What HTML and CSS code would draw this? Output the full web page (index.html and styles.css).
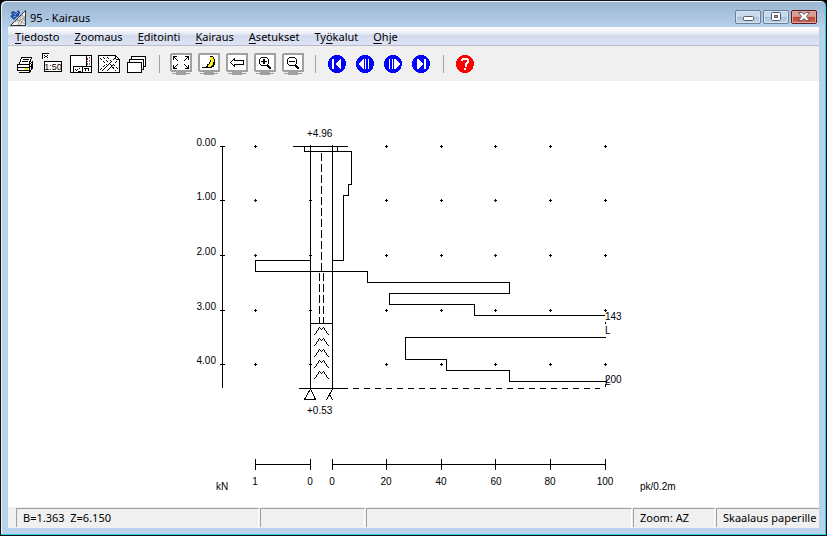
FILE: index.html
```html
<!DOCTYPE html>
<html lang="fi">
<head>
<meta charset="utf-8">
<title>95 - Kairaus</title>
<link rel="stylesheet" href="styles.css">
</head>
<body>
<div class="window">
  <header class="titlebar">
    <svg class="app-icon" viewBox="0 0 16 16" aria-hidden="true">
      <path d="M15.5 0.5V15.5H0.5Z" fill="#f4f4ee" stroke="#333"/>
      <path d="M4 12L15 8M8 15L12 4M7 9L15 14M12 4L15 12M10 15L15 6" stroke="#999" fill="none"/>
      <path d="M1 2L4 1L6 3L8 0L10 2L9 6L7 7L4 10L2 8L0 6L2 5Z" fill="#1d4d9c"/>
      <path d="M3 3L5 5L8 2M3 7L6 6" stroke="#70a4e4" fill="none"/>
    </svg>
    <h1 class="title">95 - Kairaus</h1>
    <div class="window-buttons">
      <button class="win-btn" aria-label="Pienennä"><svg viewBox="0 0 24 12"><rect x="7.5" y="5.5" width="10" height="4" rx="1" fill="#fff" stroke="#555b68"/></svg></button>
      <button class="win-btn" aria-label="Suurenna"><svg viewBox="0 0 24 12"><rect x="7.500" y="1.500" width="9" height="8" rx="1" fill="#fff" stroke="#555b68"/><rect x="10.500" y="4.500" width="3" height="2" fill="#9db6d0" stroke="#555b68"/></svg></button>
      <button class="win-btn close" aria-label="Sulje"><svg viewBox="0 0 24 12"><path d="M6.500 1.500H10L12 3.500L14 1.500H17.500L14.500 5.500L17.500 9.500H14L12 7.500L10 9.500H6.500L9.500 5.500Z" fill="#fff" stroke="#555b68"/></svg></button>
    </div>
  </header>
  <div class="content">
    <nav class="menubar">
      <button><u>T</u>iedosto</button><button><u>Z</u>oomaus</button><button><u>E</u>ditointi</button><button><u>K</u>airaus</button><button><u>A</u>setukset</button><button>Ty<u>ö</u>kalut</button><button><u>O</u>hje</button>
    </nav>
    <svg width="0" height="0" class="defs" aria-hidden="true">
      <symbol id="monitor" viewBox="0 0 28 28">
        <path d="M4 3H24L25 4V21L24 22H4L3 21V4L4 3Z" fill="#a0a0a0"/>
        <path d="M5 5H23V20H5Z" fill="#fff"/>
        <path d="M5 23H23V24H19V25H9V24H5Z" fill="#a0a0a0"/>
        <path d="M9 22H19V23H9Z" fill="#a0a0a0"/>
      </symbol>
    </svg>
    <div class="toolbar" role="toolbar" aria-label="Työkalut">
      <button aria-label="Tulosta"><svg viewBox="0 0 28 28">
        <path d="M10 7H20L17 15H7Z" fill="#fff"/>
        <path d="M6 15H21V20L18 23H8L6 20Z" fill="#fff"/>
        <path d="M10.500 7.500H20.500V9M10.500 7.500L8.500 14M20 9L18 14M12 9.500H18M11 11.500H17M6 14.500H18M6.500 15V21M7 17.500H18M18 14.500L21.500 11.500V18M7 20.500H18V15M8 22.500H18L22 18M18 18L22 15M20 20V14" fill="none" stroke="#000"/>
        <path d="M14 18H17V20H14Z" fill="#f4ef00"/>
      </svg></button>
      <button aria-label="Mittakaava 1:50"><svg viewBox="0 0 28 28">
        <rect x="5.500" y="11.500" width="17" height="10" fill="#fff" stroke="#000"/>
        <rect x="3" y="3" width="7" height="6" fill="#fff"/>
        <path d="M3 3H10V4H4V9H3ZM5 5H6V6H5ZM8 5H9V6H8ZM6 6H8V7H6ZM5 7H6V8H5ZM8 7H9V8H8Z" fill="#000"/>
        <text x="14" y="20" class="scale-text">1:50</text>
      </svg></button>
      <button aria-label="Sivun asettelu"><svg viewBox="0 0 28 28">
        <rect x="3.500" y="5.500" width="21" height="17" fill="#fff" stroke="#000"/>
        <path d="M19.500 6V17M6 16.500H24M6.500 17V22M15.500 17V22" stroke="#000"/>
        <path d="M20 8H21V10H20Z" fill="#b00"/><path d="M20 11H21V12H20Z" fill="#c0c"/><path d="M20 13H21V15H20Z" fill="#080"/>
        <path d="M22.500 7V16" stroke="#777" stroke-dasharray="2 1"/>
        <path d="M8 19H9V20H8ZM9 20H10V21H9ZM10 19H11V20H10ZM12 18H13V19H12ZM11 21H14V22H11ZM17 18H22V19H17ZM18 19H19V21H18ZM21 19H22V21H21Z"/>
      </svg></button>
      <button aria-label="Rasterit"><svg viewBox="0 0 28 28">
        <path d="M3.500 5.500H20.500L24.500 9.500V22.500H3.500Z" fill="#fff" stroke="#000"/>
        <path d="M20.500 5.500V9.500H24.500M5 8L12 15M8 7L15 14M12 7L16 11M20 8L7 21M22 11L12 21M5 20L11 14M15 14L21 21M18 14L23 19" fill="none" stroke="#000" stroke-dasharray="3 1"/>
      </svg></button>
      <button aria-label="Ikkunat"><svg viewBox="0 0 28 28" fill="#fff" stroke="#000">
        <rect x="8.500" y="6.500" width="14" height="10"/><rect x="6.500" y="9.500" width="14" height="10"/><rect x="4.500" y="12.500" width="14" height="10"/>
      </svg></button>
      <span class="sep"></span>
      <button aria-label="Koko kuva"><svg viewBox="0 0 28 28"><use href="#monitor"/>
        <path d="M6.500 10V6.500H10M7 7L11 11M18 6.500H21.500V10M21 7L17 11M6.500 15V18.500H10M7 18L11 14M18 18.500H21.500V15M21 18L17 14" fill="none" stroke="#000"/>
      </svg></button>
      <button aria-label="Piirrä uudelleen"><svg viewBox="0 0 28 28"><use href="#monitor"/>
        <path d="M15 6H18V7H19V9H20V15H19V17H17V18H7V17H11V16H12V14H14V12H15Z" fill="#000"/>
        <path d="M15 7H17V9H18V11H17V14H16V15H15V16H13V15H14V14H15V12H16V9H15Z" fill="#ffef20" stroke="#ffef20" stroke-width="1"/>
      </svg></button>
      <button aria-label="Edellinen näkymä"><svg viewBox="0 0 28 28"><use href="#monitor"/>
        <path d="M7.500 12.500L11.500 8.500V10.500H20.500V14.500H11.500V16.500Z" fill="#fff" stroke="#000"/>
      </svg></button>
      <button aria-label="Lähennä"><svg viewBox="0 0 28 28"><use href="#monitor"/>
        <circle cx="13" cy="11.500" r="4.500" fill="#fff" stroke="#000"/><path d="M10 11H16V12H10ZM12 9H14V14H12Z"/><path d="M16 15L20 19" stroke="#000" stroke-width="2"/>
      </svg></button>
      <button aria-label="Loitonna"><svg viewBox="0 0 28 28"><use href="#monitor"/>
        <circle cx="13" cy="11.500" r="4.500" fill="#fff" stroke="#000"/><path d="M10 11H16V12H10Z"/><path d="M16 15L20 19" stroke="#000" stroke-width="2"/>
      </svg></button>
      <span class="sep"></span>
      <button aria-label="Ensimmäinen"><svg viewBox="0 0 28 28"><circle cx="14" cy="14" r="9" fill="#00f"/><path d="M9 9H11V19H9ZM17 9H18V19H17L12 14Z" fill="#fff"/></svg></button>
      <button aria-label="Edellinen"><svg viewBox="0 0 28 28"><circle cx="14" cy="14" r="9" fill="#00f"/><path d="M12 9H13V19H12L7 14ZM14 9H15V19H14ZM17 9H18V19H17Z" fill="#fff"/></svg></button>
      <button aria-label="Seuraava"><svg viewBox="0 0 28 28"><circle cx="14" cy="14" r="9" fill="#00f"/><path d="M16 9H15V19H16L21 14ZM10 9H11V19H10ZM13 9H14V19H13Z" fill="#fff"/></svg></button>
      <button aria-label="Viimeinen"><svg viewBox="0 0 28 28"><circle cx="14" cy="14" r="9" fill="#00f"/><path d="M17 9H19V19H17ZM11 9H10V19H11L16 14Z" fill="#fff"/></svg></button>
      <span class="sep"></span>
      <button aria-label="Ohje"><svg viewBox="0 0 28 28"><circle cx="14" cy="14" r="9" fill="#f00"/><path d="M11 11V9.500L12.500 8.500H15.500L17 9.500V12L14.500 14V16.500M14 18V20" fill="none" stroke="#fff" stroke-width="2"/></svg></button>
    </div>
    <main class="canvas">
      <svg class="chart" viewBox="8 81 811 426" role="img" aria-label="Kairausdiagrammi">
        <defs>
          <path id="mark" d="M-1 0.500H2M0.500 -1V2"/>
          <g id="row"><use href="#mark" x="255"/><use href="#mark" x="310"/><use href="#mark" x="386"/><use href="#mark" x="441"/><use href="#mark" x="495"/><use href="#mark" x="550"/><use href="#mark" x="605"/></g>
          <path id="chevron" d="M314.500 9L319.500 1.500L321.500 3.500L323.500 1.500L328.500 9"/>
        </defs>
        <g class="lines">
          <path d="M222.500 146V388M220 146.500H225M220 200.500H225M220 255.500H225M220 310.500H225M220 364.500H225"/>
          <use href="#row" y="146"/><use href="#row" y="200"/><use href="#row" y="255"/><use href="#row" y="310"/><use href="#row" y="364"/>
          <path d="M293 146.500H348M310.500 145V389M332.500 145V389M304.500 146V151.500H351.500V184.500H348.500V195.500H343.500V260.500H332M337.500 146V151"/>
          <path d="M311 260.500H255.500V271.500H367.500V282.500H509.500V293.500H389.500V304.500H474.500V315.500H605"/>
          <path d="M606 337.500H405.500V359.500H446.500V370.500H509.500V381.500H606M605.500 322V324M605.500 384V387"/>
          <path d="M321.500 153V271" stroke-dasharray="8 3"/>
          <path d="M319.500 273V323M323.500 273V323" stroke-dasharray="8 3"/>
          <path d="M310 323.500H333M299 388.500H348"/>
          <path d="M353 388.500H600" stroke-dasharray="6 5"/>
          <use href="#chevron" y="326"/><use href="#chevron" y="337"/><use href="#chevron" y="348"/><use href="#chevron" y="359"/><use href="#chevron" y="370"/>
          <path d="M310.500 389L304.500 399.500H315.500L310.500 389M332.500 389L326.500 400M329.500 394L332.500 400"/>
          <path d="M255 464.500H311M332 464.500H606M255.500 459V470M310.500 459V470M332.500 459V470M386.500 459V470M441.500 459V470M495.500 459V470M550.500 459V470M605.500 459V470"/>
        </g>
        <g class="labels">
          <g text-anchor="end"><text x="216" y="146">0.00</text><text x="216" y="200">1.00</text><text x="216" y="255">2.00</text><text x="216" y="310">3.00</text><text x="216" y="364">4.00</text></g>
          <text x="307" y="137">+4.96</text><text x="307" y="414">+0.53</text>
          <text x="605" y="320">143</text><text x="605" y="334">L</text><text x="605" y="383">200</text><text x="605" y="385">L</text>
          <g text-anchor="middle"><text x="255" y="485">1</text><text x="310" y="485">0</text><text x="332" y="485">0</text><text x="386" y="485">20</text><text x="441" y="485">40</text><text x="496" y="485">60</text><text x="550" y="485">80</text><text x="605" y="485">100</text></g>
          <text x="216" y="490">kN</text><text x="640" y="490">pk/0.2m</text>
        </g>
      </svg>
    </main>
    <footer class="statusbar">
      <span class="panel">B=1.363&nbsp; Z=6.150</span><span class="panel"></span><span class="panel"></span><span class="panel">Zoom: AZ</span><span class="panel">Skaalaus paperille</span>
    </footer>
  </div>
</div>
</body>
</html>
```
FILE: styles.css
```css
* { box-sizing: border-box; }
html, body { height: 100%; }
body {
  margin: 0;
  background: #000;
  font: 11px/16px "Noto Sans", "Open Sans", sans-serif;
  color: #000;
}
button { border: 0; padding: 0; background: none; font: inherit; color: inherit; }
.window {
  height: 100vh;
  display: flex;
  flex-direction: column;
  padding: 0 6px 7px;
  border: 1px solid #111;
  border-radius: 6px 6px 0 0;
  background: linear-gradient(#9ab4d1, #b9d1ea 28px);
  box-shadow: inset -1px -1px #2ccfe6, inset 1px 1px #e8f4fc;
}
.titlebar { flex: none; display: flex; align-items: flex-start; height: 26px; padding: 9px 3px 0; }
.app-icon { width: 16px; height: 16px; }
.title { flex: 1; margin: 0 0 0 4px; font-size: 11px; font-weight: 400; }
.window-buttons { display: flex; gap: 2px; }
.win-btn {
  width: 26px;
  height: 14px;
  border: 1px solid #66809e;
  border-radius: 2px;
  background: linear-gradient(#c8d9ea 45%, #a7c0da 50%, #c2d7ec);
  box-shadow: inset 0 0 0 1px #d8e6f3;
}
.win-btn svg { display: block; width: 24px; height: 12px; }
.close { border-color: #5b1a24; background: linear-gradient(#dc9b90 45%, #bd4632 50%, #d0674f); box-shadow: inset 0 0 0 1px #e2a79c; }
.content { flex: 1; min-height: 0; display: flex; flex-direction: column; margin: 0 1px; background: #fff; }
.menubar {
  flex: none;
  display: flex;
  gap: 1px;
  height: 19px;
  padding-top: 2px;
  border-bottom: 1px solid #b6bccc;
  background: linear-gradient(#fff, #e6eaf5 40%, #d2daed 45%, #dfe4f5);
}
.menubar button { padding: 0 7px; white-space: nowrap; }
u { text-underline-offset: 2px; }
.defs { position: absolute; }
.toolbar { flex: none; display: flex; align-items: center; height: 35px; padding-left: 3px; background: #f0f0f0; }
.toolbar button, .toolbar button svg { display: block; width: 28px; height: 28px; }
.toolbar svg { shape-rendering: crispEdges; }
.scale-text { font: 9px "Liberation Sans", sans-serif; text-anchor: middle; stroke: none; }
.sep { width: 1px; height: 18px; margin: 0 7px 0 8px; background: #a0a0a0; }
.canvas { flex: 1; min-height: 0; }
.chart { display: block; width: 100%; height: 100%; }
.lines { fill: none; stroke: #000; shape-rendering: crispEdges; }
.labels { font: 10px "Liberation Sans", Arial, sans-serif; }
.statusbar {
  flex: none;
  display: grid;
  grid-template-columns: 243fr 105fr 266fr 82px 103px;
  gap: 1px;
  height: 21px;
  padding: 1px 0 2px 8px;
  background: #f0f0f0;
  white-space: nowrap;
}
.panel { border: solid #a0a0a0; border-width: 1px 0 0 1px; border-right: 1px solid #fff; padding-left: 6px; line-height: 18px; }
.panel:last-child { border-right: 0; }
```
